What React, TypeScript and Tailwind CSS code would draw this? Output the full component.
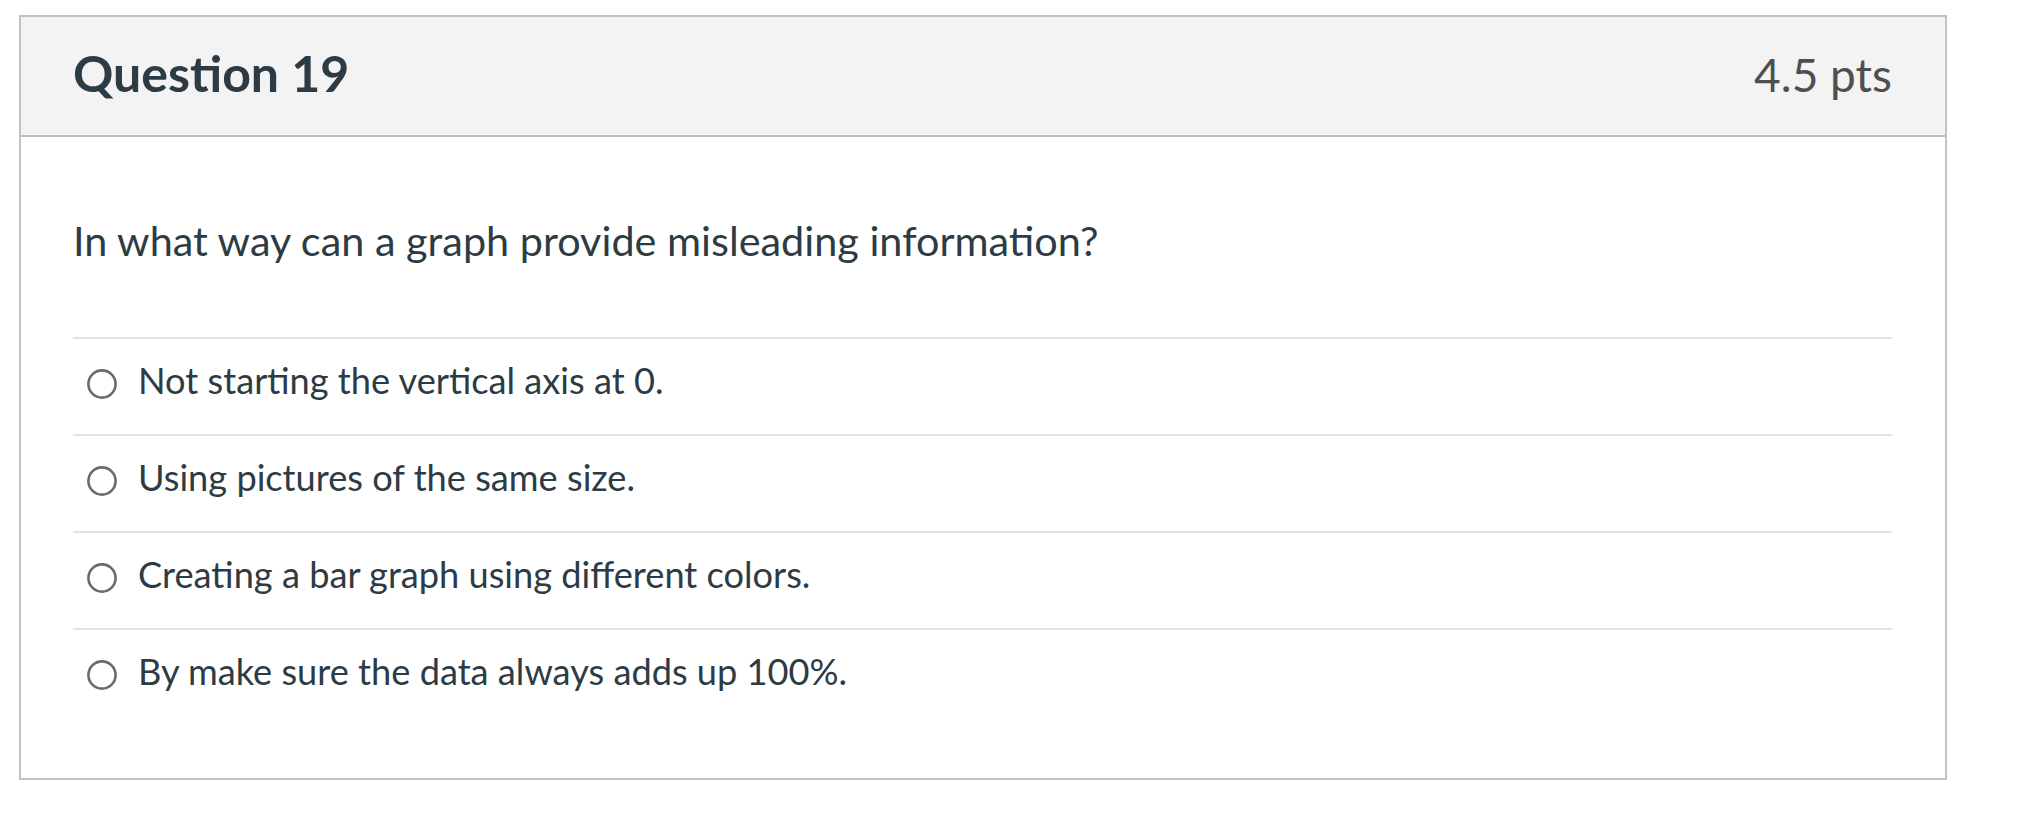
const answers = [
  "Not starting the vertical axis at 0.",
  "Using pictures of the same size.",
  "Creating a bar graph using different colors.",
  "By make sure the data always adds up 100%.",
];

function RadioCircle() {
  return (
    <svg width="30" height="30" viewBox="0 0 30 30" className="shrink-0 mt-[10px] ml-[14px]">
      <circle cx="15" cy="15" r="13.6" fill="white" stroke="#6b6b6b" strokeWidth="2.6" />
    </svg>
  );
}

export default function App() {
  return (
    <div className="min-h-screen bg-white pl-[19px] pt-[15px] font-[Lato,sans-serif]">
      <div className="w-[1928px] border-2 border-[#c2c2c2]">
        <div className="h-[120px] bg-[#f3f3f3] border-b-2 border-[#bdbdbd] pl-[52px] pr-[53px] pt-[26px] flex items-baseline justify-between">
          <h2 className="text-[50px] leading-[60px] font-bold text-[#2d3b45]">Question 19</h2>
          <span className="text-[46px] leading-[56px] text-[#4f4f4f]">4.5 pts</span>
        </div>

        <div className="pl-[52px] pr-[53px] pt-[79px] pb-[53px]">
          <p className="text-[41.4px] leading-[49px] text-[#2d3b45] mb-[72px]">
            In what way can a graph provide misleading information?
          </p>

          {answers.map((a) => (
            <div key={a} className="border-t-2 border-[#e2e2e2] h-[97px] pt-[20px] flex items-start">
              <RadioCircle />
              <span className="ml-[21px] text-[36.2px] leading-[42px] text-[#2d3b45]">{a}</span>
            </div>
          ))}
        </div>
      </div>
    </div>
  );
}
